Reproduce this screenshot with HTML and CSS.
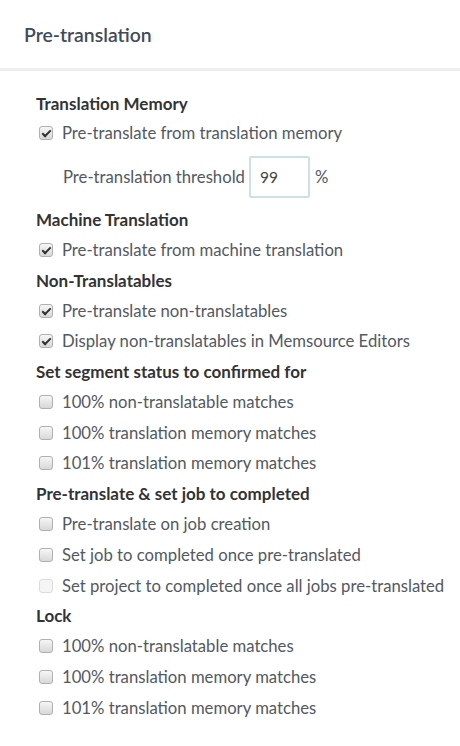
FILE: index.html
```html
<!DOCTYPE html>
<html>
<head>
<meta charset="utf-8">
<link rel="stylesheet" href="styles.css">
</head>
<body>
<div class="header">Pre-translation</div>
<div class="content">
  <div class="heading">Translation Memory</div>
  <div class="row"><span class="cb checked"></span><span class="label">Pre-translate from translation memory</span></div>
  <div class="threshold"><span class="label">Pre-translation threshold</span><span class="input">99</span><span class="label">%</span></div>
  <div class="heading">Machine Translation</div>
  <div class="row"><span class="cb checked"></span><span class="label">Pre-translate from machine translation</span></div>
  <div class="heading">Non-Translatables</div>
  <div class="row"><span class="cb checked"></span><span class="label">Pre-translate non-translatables</span></div>
  <div class="row"><span class="cb checked"></span><span class="label">Display non-translatables in Memsource Editors</span></div>
  <div class="heading">Set segment status to confirmed for</div>
  <div class="row"><span class="cb"></span><span class="label">100% non-translatable matches</span></div>
  <div class="row"><span class="cb"></span><span class="label">100% translation memory matches</span></div>
  <div class="row"><span class="cb"></span><span class="label">101% translation memory matches</span></div>
  <div class="heading">Pre-translate &amp; set job to completed</div>
  <div class="row"><span class="cb"></span><span class="label">Pre-translate on job creation</span></div>
  <div class="row"><span class="cb"></span><span class="label">Set job to completed once pre-translated</span></div>
  <div class="row"><span class="cb disabled"></span><span class="label">Set project to completed once all jobs pre-translated</span></div>
  <div class="heading">Lock</div>
  <div class="row"><span class="cb"></span><span class="label">100% non-translatable matches</span></div>
  <div class="row"><span class="cb"></span><span class="label">100% translation memory matches</span></div>
  <div class="row"><span class="cb"></span><span class="label">101% translation memory matches</span></div>
</div>
</body>
</html>
```
FILE: styles.css
```css
html, body {
  margin: 0;
  padding: 0;
  background: #fff;
  font-family: Lato, "Open Sans", sans-serif;
}
.header {
  padding-left: 24px;
  display: flex;
  align-items: center;
  font-size: 19.4px;
  font-weight: 600;
  color: #3f4b59;
  border-bottom: 3px solid #eeeeee;
  box-sizing: border-box;
  height: 71px;
}
.content {
  padding: 17px 0 0 36px;
  display: flex;
  flex-direction: column;
}
.heading {
  height: 30px;
  display: flex;
  align-items: center;
  font-size: 17px;
  font-weight: 700;
  color: #333333;
}
.row {
  height: 30.7px;
  display: flex;
  align-items: center;
  gap: 9px;
  padding-left: 3px;
}
.label {
  font-size: 16.7px;
  color: #535960;
}
.cb {
  width: 14px;
  height: 14px;
  box-sizing: border-box;
  border: 1px solid #b0b0b0;
  border-radius: 3px;
  background: linear-gradient(#f6f6f6, #d8d8d8);
  position: relative;
  flex: none;
}
.cb.checked::after {
  content: "";
  position: absolute;
  left: 4px;
  top: 1px;
  width: 3px;
  height: 7px;
  border: solid #2f2f2f;
  border-width: 0 2px 2px 0;
  transform: rotate(45deg);
}
.cb.disabled {
  border-color: #dcdcdc;
  background: #f5f5f5;
}
.threshold {
  height: 56px;
  display: flex;
  align-items: center;
  padding-left: 27px;
}
.input {
  width: 61px;
  height: 42px;
  box-sizing: border-box;
  border: 2px solid #cde0e8;
  border-radius: 2px;
  margin: 0 5px 0 4px;
  display: flex;
  align-items: center;
  padding-left: 9px;
  font-size: 15.5px;
  color: #444;
}
```
